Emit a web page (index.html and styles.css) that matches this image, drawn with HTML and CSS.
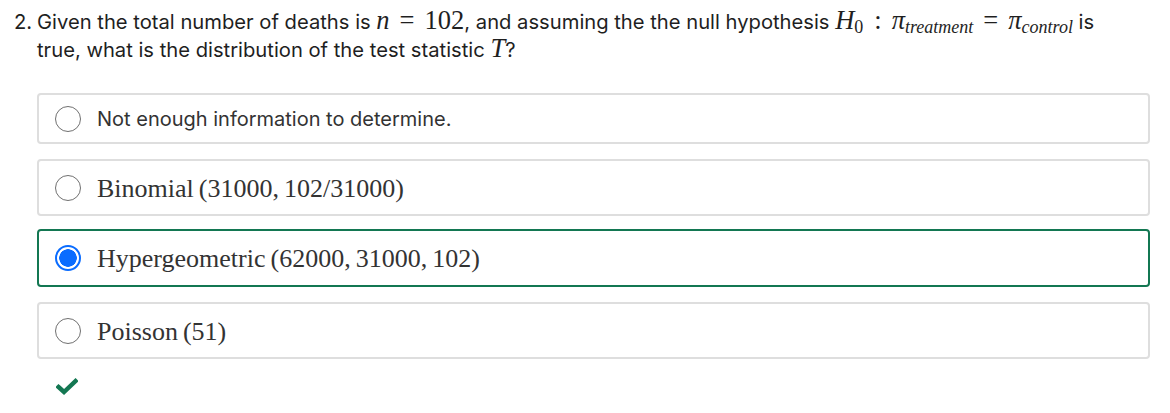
FILE: index.html
```html
<!DOCTYPE html>
<html lang="en">
<head>
<meta charset="utf-8">
<title>Question 2</title>
<link rel="stylesheet" href="styles.css">
</head>
<body>
<div class="question">
  <div class="prompt">
    <span class="qnum">2.</span>
    <p class="qtext">Given the total number of deaths is <span class="m"><i>n</i><span class="rel">=</span>102</span>, and assuming the the null hypothesis <span class="m"><i>H</i><sub>0</sub><span class="colon">:</span><i>π</i><sub><i>treatment</i></sub><span class="rel">=</span><i>π</i><sub><i>control</i></sub></span> is true, what is the distribution of the test statistic <span class="m"><i>T</i></span>?</p>
  </div>
  <div class="options">
    <label class="option">
      <span class="radio"></span>
      <span class="otext">Not enough information to determine.</span>
    </label>
    <label class="option math">
      <span class="radio"></span>
      <span class="otext m">Binomial<span class="sp"></span>(31000,<span class="thin"></span>102/31000)</span>
    </label>
    <label class="option math selected">
      <span class="radio checked"></span>
      <span class="otext m">Hypergeometric<span class="sp"></span>(62000,<span class="thin"></span>31000,<span class="thin"></span>102)</span>
    </label>
    <label class="option math">
      <span class="radio"></span>
      <span class="otext m">Poisson<span class="sp"></span>(51)</span>
    </label>
  </div>
  <div class="feedback">
    <svg width="22" height="18" viewBox="0 0 22 18" aria-hidden="true"><path d="M2.5 10 L8 15 L19.5 4" fill="none" stroke="#137752" stroke-width="4.4" stroke-linecap="square" stroke-linejoin="miter"/></svg>
  </div>
</div>
</body>
</html>
```

FILE: styles.css
```css
* { box-sizing: border-box; }
html, body { margin: 0; padding: 0; background: #fff; }
body {
  font-family: Inter, Roboto, "Liberation Sans", sans-serif;
  color: #1f1f1f;
}
.question {
  padding: 8px 20px 0 14px;
}
.prompt {
  display: flex;
  font-size: 20.2px;
  line-height: 28px;
  padding-right: 36px;
}
.qnum {
  width: 23px;
  flex: none;
}
.qtext {
  margin: 0;
  flex: 1;
}
.m {
  font-family: "Liberation Serif", "DejaVu Serif", serif;
  font-size: 26.5px;
  white-space: nowrap;
}
.qtext .m { line-height: 16px; }
.m i { font-style: italic; }
.m sub {
  font-size: 18px;
  vertical-align: -4px;
  line-height: 0;
}
.rel { margin: 0 10px; }
.colon { margin: 0 10px 0 11px; }
.options {
  margin: 29px 0 0 23px;
  display: flex;
  flex-direction: column;
  gap: 15px;
}
.option {
  display: flex;
  align-items: center;
  gap: 16px;
  height: 51px;
  padding: 0 16px;
  border: 2px solid #dedede;
  border-radius: 4px;
  font-size: 20px;
  color: #333;
}
.option.math { height: 57px; }
.option.selected {
  border-color: #137752;
  height: 58px;
  margin-top: -2px;
}
.radio {
  flex: none;
  width: 26px;
  height: 26px;
  border: 1.5px solid #707070;
  border-radius: 50%;
}
.radio.checked {
  border: 2px solid #0a6cff;
  background: radial-gradient(circle, #0a6cff 0 8.5px, #fff 9px);
}
.otext.m {
  font-size: 26px;
  color: #333;
  padding-top: 2px;
}
.sp { display: inline-block; width: 5px; }
.thin { display: inline-block; width: 5px; }
.feedback {
  margin: 18px 0 0 42px;
  height: 20px;
}
.feedback svg { display: block; }
```
